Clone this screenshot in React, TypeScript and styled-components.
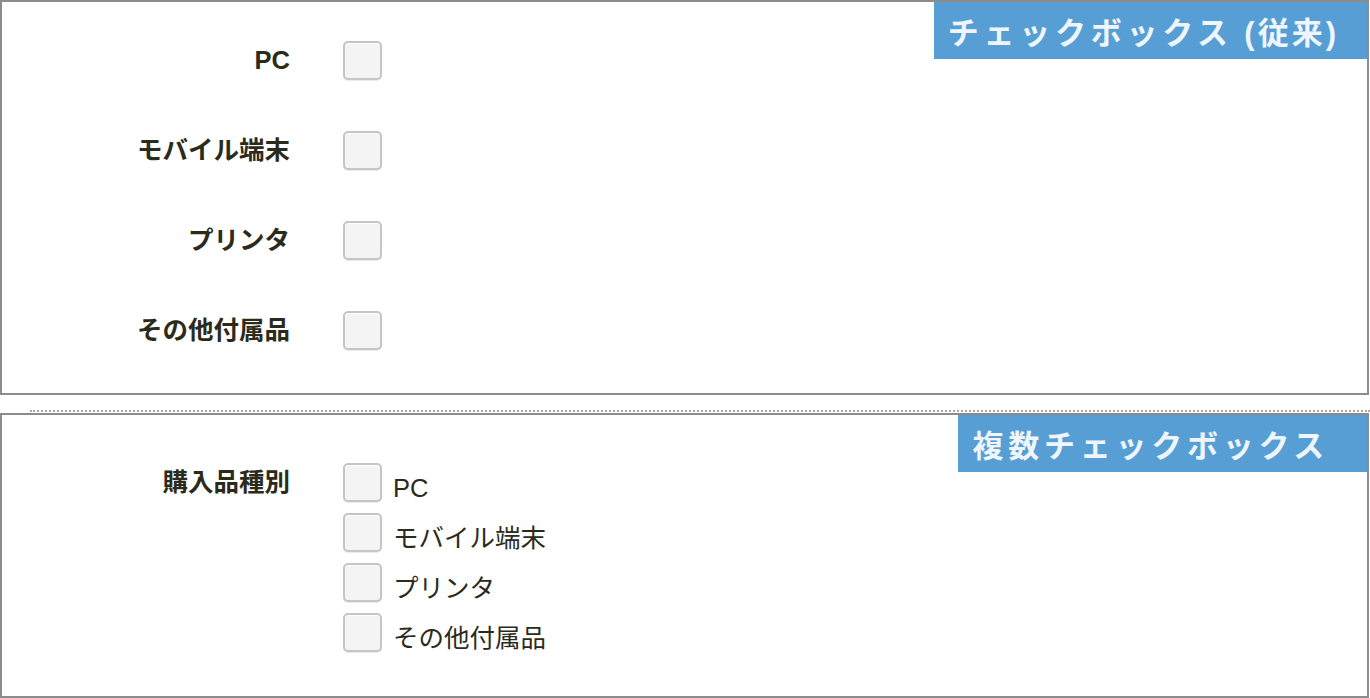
import React from "react";
import styled, { createGlobalStyle } from "styled-components";

const GlobalStyle = createGlobalStyle`
  html, body {
    margin: 0;
    padding: 0;
    background: #ffffff;
  }
  body {
    font-family: "Liberation Sans", "Noto Sans CJK JP", sans-serif;
    color: #2b2b1c;
  }
`;

const Page = styled.div`
  width: 1369px;
  display: flex;
  flex-direction: column;
`;

const Panel = styled.section<{ $padTop: number; $padBottom: number }>`
  position: relative;
  box-sizing: border-box;
  border: 2px solid #8c8c8c;
  padding: ${(p) => p.$padTop}px 0 ${(p) => p.$padBottom}px 0;
`;

const Badge = styled.div<{ $padRight: number }>`
  position: absolute;
  top: 0;
  right: 0;
  height: 57px;
  display: flex;
  align-items: center;
  padding: 0 ${(p) => p.$padRight}px 0 14px;
  background: #569ed4;
  color: #eef5fc;
  font-family: "Liberation Sans", "Noto Sans CJK JP", sans-serif;
  font-weight: 700;
  font-size: 31px;
  letter-spacing: 4.75px;
  white-space: nowrap;
`;

const BadgeText = styled.span`
  display: inline;
`;

const BadgeNote = styled.span`
  letter-spacing: 3px;
`;

const RowList = styled.div<{ $gap: number }>`
  display: flex;
  flex-direction: column;
  gap: ${(p) => p.$gap}px;
`;

const FieldRow = styled.div<{ $align: string }>`
  display: grid;
  grid-template-columns: 288px auto;
  column-gap: 53px;
  align-items: ${(p) => p.$align};
`;

const Label = styled.div`
  text-align: right;
  font-weight: 700;
  font-size: 25.5px;
  line-height: 39px;
  color: #2b2b1c;
  white-space: nowrap;
`;

const Box = styled.span`
  display: inline-block;
  box-sizing: border-box;
  width: 39px;
  height: 39px;
  flex: 0 0 auto;
  border: 2px solid #c2c6c8;
  border-radius: 5px;
  background: #f4f4f4;
  box-shadow: inset 0 1px 1px rgba(255, 255, 255, 0.9), 0 1px 0 rgba(0, 0, 0, 0.08);
`;

const Options = styled.div`
  display: flex;
  flex-direction: column;
  gap: 11px;
`;

const Option = styled.label`
  display: flex;
  align-items: flex-start;
  gap: 11px;
  height: 39px;
`;

const OptionText = styled.span`
  font-size: 25.5px;
  font-weight: 400;
  line-height: 28px;
  padding-top: 11px;
  color: #2b2b1c;
  white-space: nowrap;
`;

const Divider = styled.div`
  margin: 15px 0 1px 30px;
  border-top: 2px dotted #a8a8a8;
  width: calc(100% - 29px);
`;

const single = ["PC", "モバイル端末", "プリンタ", "その他付属品"];

export default function App() {
  return (
    <>
      <GlobalStyle />
      <Page>
        <Panel $padTop={39} $padBottom={43}>
          <RowList $gap={51}>
            {single.map((s) => (
              <FieldRow key={s} $align="center">
                <Label>{s}</Label>
                <Box />
              </FieldRow>
            ))}
          </RowList>
          <Badge $padRight={28}>
            <BadgeText>
              チェックボックス<BadgeNote>{" (従来)"}</BadgeNote>
            </BadgeText>
          </Badge>
        </Panel>
        <Divider />
        <Panel $padTop={48} $padBottom={44}>
          <FieldRow $align="start">
            <Label>購入品種別</Label>
            <Options>
              {single.map((s) => (
                <Option key={s}>
                  <Box />
                  <OptionText>{s}</OptionText>
                </Option>
              ))}
            </Options>
          </FieldRow>
          <Badge $padRight={38}>
            <BadgeText>複数チェックボックス</BadgeText>
          </Badge>
        </Panel>
      </Page>
    </>
  );
}
